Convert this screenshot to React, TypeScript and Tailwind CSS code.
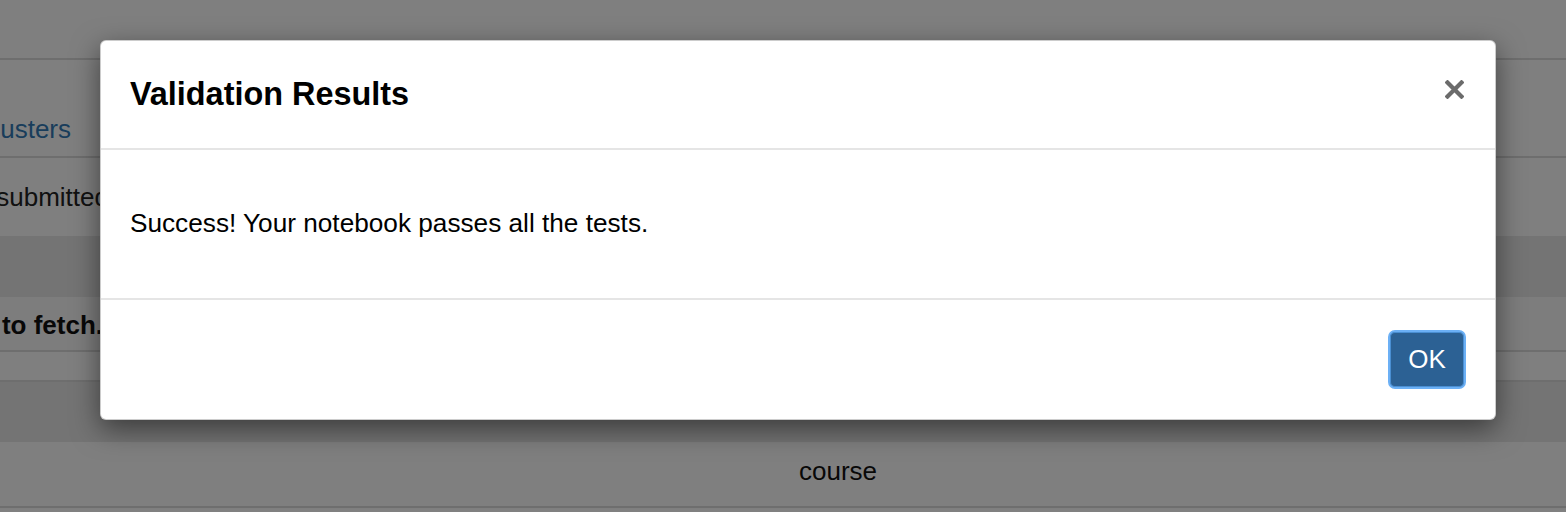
export default function App() {
  return (
    <div className="relative h-[512px] w-full overflow-hidden bg-white font-['Liberation_Sans',Arial,sans-serif] text-[26px] leading-[37px] text-[#222]">
      {/* underlying page */}
      <div className="flex flex-col">
        <div className="h-[60px] border-b-2 border-[#dddddd]" />
        <div className="h-[98px] border-b-2 border-[#dddddd] pt-[51px]">
          <div className="flex w-[71px] justify-end overflow-hidden whitespace-nowrap text-[#337ab7]">Clusters</div>
        </div>
        <div className="h-[78px] pt-[21px]">
          <div className="flex w-[109px] justify-end overflow-hidden whitespace-nowrap">been submitted</div>
        </div>
        <div className="h-[61px] bg-[#e8e8e8]" />
        <div className="h-[55px] border-b-2 border-[#dddddd] bg-[#fafafa] pt-[10px]">
          <div className="flex w-[103px] justify-end overflow-hidden whitespace-nowrap font-bold text-[#111]">Nothing to fetch.</div>
        </div>
        <div className="h-[30px] border-b-2 border-[#dddddd]" />
        <div className="h-[60px] bg-[#e8e8e8]" />
        <div className="h-[66px] border-b-2 border-[#dddddd] pl-[110px] pt-[11px] text-center text-[#111]">course</div>
      </div>

      {/* backdrop */}
      <div className="absolute inset-0 bg-black/50" />

      {/* modal */}
      <div className="absolute left-[100px] top-[40px] w-[1396px] rounded-[6px] border border-black/20 bg-white text-black shadow-[0_9px_28px_rgba(0,0,0,0.5)]">
        <div className="flex items-start justify-between border-b-2 border-[#e5e5e5] pb-[31px] pl-[29px] pr-[31px] pt-[30px]">
          <h4 className="text-[32.4px] font-bold leading-[46px]">Validation Results</h4>
          <svg className="mt-[9px]" width="19" height="19" viewBox="0 0 19 19">
            <path d="M2.5 2.5 L16.5 16.5 M16.5 2.5 L2.5 16.5" stroke="#6b6b6b" strokeWidth="4.2" strokeLinecap="square" />
          </svg>
        </div>
        <div className="px-[29px] pb-[56px] pt-[55px]">
          <p className="text-[26.2px]">Success! Your notebook passes all the tests.</p>
        </div>
        <div className="flex justify-end border-t-2 border-[#e5e5e5] pb-[30px] pr-[29px] pt-[30px]">
          <button className="box-border flex h-[59px] w-[78px] items-center justify-center rounded-[7px] border-2 border-[#6cb0f5] bg-[#2c6194] text-[26px] text-white shadow-[inset_0_0_0_1px_#4a8fd3]">
            OK
          </button>
        </div>
      </div>
    </div>
  );
}
